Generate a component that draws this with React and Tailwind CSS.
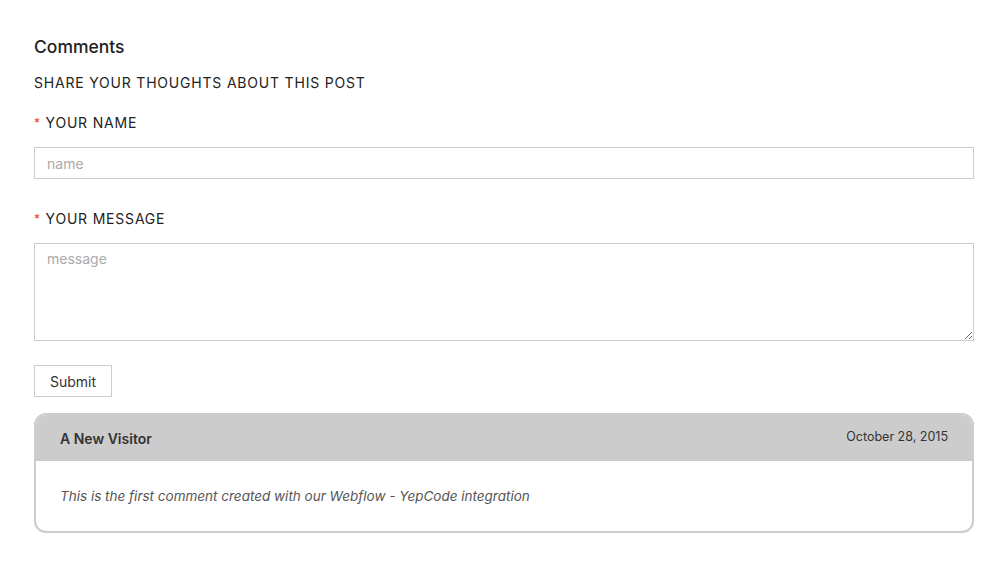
export default function App() {
  return (
    <div className="min-h-[566px] bg-white text-[#222]" style={{ fontFamily: 'Inter, "Noto Sans", sans-serif' }}>
      <div className="ml-[34px] mr-[32px] pt-[35px]">
        <h2 className="text-[17.5px] leading-[24px] font-medium text-[#222]">Comments</h2>
        <p className="mt-[14px] text-[14px] leading-[20px] tracking-[0.8px] uppercase text-[#222]">Share your thoughts about this post</p>

        <form onSubmit={e => e.preventDefault()}>
          <label className="mt-[20px] block text-[14px] leading-[20px] tracking-[0.8px] uppercase">
            <span className="text-[#ea384c] text-[12px] align-top">*</span> Your name
          </label>
          <input
            placeholder="name"
            className="mt-[14px] block w-full h-[32px] px-[12px] border border-[#cccccc] text-[14px] text-[#333] placeholder:text-[#aaaaaa] outline-none"
          />

          <label className="mt-[30px] block text-[14px] leading-[20px] tracking-[0.8px] uppercase">
            <span className="text-[#ea384c] text-[12px] align-top">*</span> Your message
          </label>
          <textarea
            placeholder="message"
            className="mt-[14px] block w-full h-[98px] px-[12px] py-[5px] border border-[#cccccc] text-[14px] leading-[20px] text-[#333] placeholder:text-[#aaaaaa] outline-none resize-y"
          />

          <button className="mt-[24px] block w-[78px] h-[32px] border border-[#cccccc] bg-white text-[14px] text-[#333]">
            Submit
          </button>
        </form>

        <div className="mt-[16px] border-2 border-[#cccccc] rounded-[12px] overflow-hidden">
          <div className="h-[46px] bg-[#cccccc] flex items-start justify-between px-[24px]">
            <span className="mt-[14px] text-[14px] leading-[20px] font-semibold text-[#333]">A New Visitor</span>
            <span className="mt-[13px] text-[12.5px] leading-[18px] text-[#333]">October 28, 2015</span>
          </div>
          <div className="h-[70px] px-[24px] flex items-center">
            <p className="text-[13.5px] leading-[20px] italic text-[#555]">This is the first comment created with our Webflow - YepCode integration</p>
          </div>
        </div>
      </div>
    </div>
  )
}
